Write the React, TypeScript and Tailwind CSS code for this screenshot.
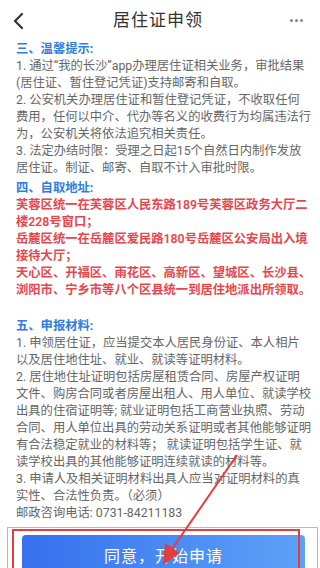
import React from "react";

const tips = [
  "1. 通过“我的长沙”app办理居住证相关业务，审批结果",
  "(居住证、暂住登记凭证)支持邮寄和自取。",
  "2. 公安机关办理居住证和暂住登记凭证，不收取任何",
  "费用，任何以中介、代办等名义的收费行为均属违法行",
  "为，公安机关将依法追究相关责任。",
  "3. 法定办结时限：受理之日起15个自然日内制作发放",
  "居住证。制证、邮寄、自取不计入审批时限。",
];

const address = [
  "芙蓉区统一在芙蓉区人民东路189号芙蓉区政务大厅二",
  "楼228号窗口；",
  "岳麓区统一在岳麓区爱民路180号岳麓区公安局出入境",
  "接待大厅；",
  "天心区、开福区、雨花区、高新区、望城区、长沙县、",
  "浏阳市、宁乡市等八个区县统一到居住地派出所领取。",
];

const materials = [
  "1. 申领居住证，应当提交本人居民身份证、本人相片",
  "以及居住地住址、就业、就读等证明材料。",
  "2. 居住地住址证明包括房屋租赁合同、房屋产权证明",
  "文件、购房合同或者房屋出租人、用人单位、就读学校",
  "出具的住宿证明等; 就业证明包括工商营业执照、劳动",
  "合同、用人单位出具的劳动关系证明或者其他能够证明",
  "有合法稳定就业的材料等； 就读证明包括学生证、就",
  "读学校出具的其他能够证明连续就读的材料等。",
  "3. 申请人及相关证明材料出具人应当对证明材料的真",
  "实性、合法性负责。（必须）",
  "邮政咨询电话: 0731-84211183",
];

function Lines({ items, className }: { items: string[]; className: string }) {
  return (
    <div className={className}>
      {items.map((t, i) => (
        <div key={i} className="whitespace-nowrap">{t}</div>
      ))}
    </div>
  );
}

export default function App() {
  return (
    <main
      className="relative w-[320px] h-[568px] overflow-hidden bg-white"
      style={{ fontFamily: "Roboto, 'Noto Sans CJK SC', sans-serif" }}
    >
      <header className="h-[41px] flex items-center justify-between px-[12px]">
        <svg width="14" height="18" viewBox="0 0 14 18" className="text-[#333]">
          <polyline points="10,2 3,9 10,16" fill="none" stroke="currentColor" strokeWidth="2.2" strokeLinecap="round" strokeLinejoin="round" />
        </svg>
        <h1 className="text-[17px] text-[#333] tracking-[1px]">居住证申领</h1>
        <div className="flex gap-[2px] w-[14px] mr-[4px]">
          <span className="w-[3px] h-[3px] rounded-full bg-[#888]" />
          <span className="w-[3px] h-[3px] rounded-full bg-[#888]" />
          <span className="w-[3px] h-[3px] rounded-full bg-[#888]" />
        </div>
      </header>

      <section className="px-[16px] text-[12.3px] leading-[17px]">
        <h2 className="font-bold text-[#2f7de1]">三、温馨提示:</h2>
        <Lines items={tips} className="text-[#666]" />

        <h2 className="font-bold text-[#2f7de1] mt-[3px]">四、自取地址:</h2>
        <Lines items={address} className="text-[#e8464c] font-semibold" />

        <h2 className="font-bold text-[#2f7de1] mt-[19px]">五、申报材料:</h2>
        <Lines items={materials} className="text-[#666]" />
      </section>

      <div className="px-[22px] mt-[13px]">
        <button className="w-[283px] h-[44px] rounded-[4px] bg-gradient-to-r from-[#3670ee] to-[#5da2f8] text-white text-[16px] tracking-[1px]">
          同意，开始申请
        </button>
      </div>

      {/* annotation overlay */}
      <div className="absolute left-[7px] top-[527px] w-[311px] h-[50px] border border-[#f2a0a0]" />
      <div className="absolute left-[12px] top-[529px] w-[288px] h-[50px] border-2 border-[#e53d3d]" />
      <svg className="absolute left-0 top-0" width="320" height="568" viewBox="0 0 320 568">
        <line x1="237" y1="455" x2="170" y2="552" stroke="#e53d3d" strokeWidth="2" />
        <polygon points="163,565 165,543 180,553" fill="#e53d3d" />
      </svg>
    </main>
  );
}
